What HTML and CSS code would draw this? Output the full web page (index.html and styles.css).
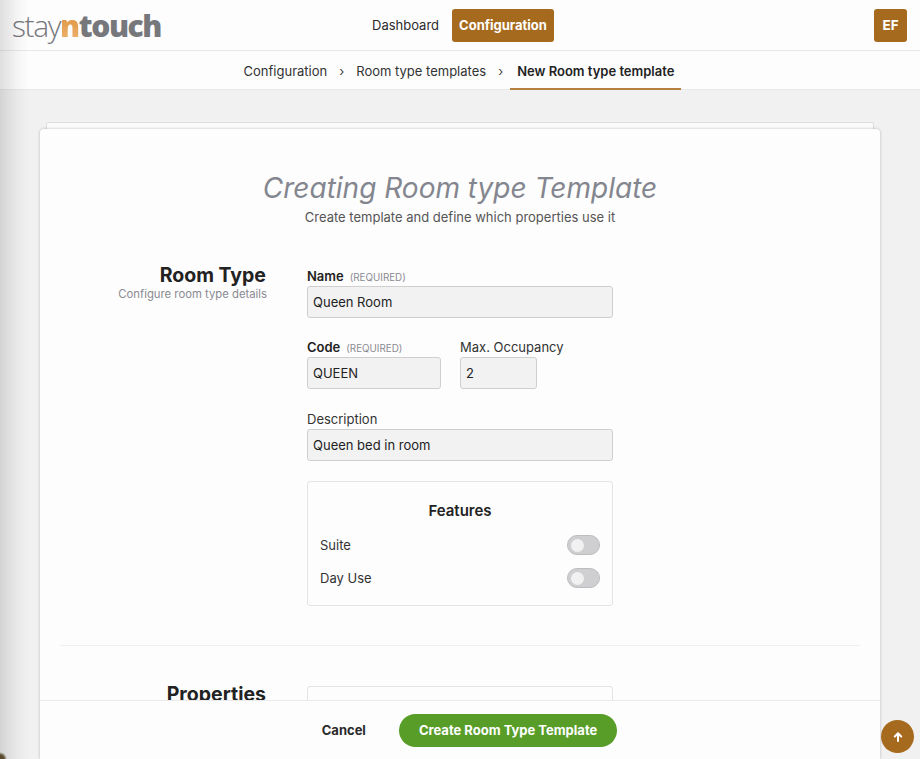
FILE: index.html
```html
<!DOCTYPE html>
<html lang="en">
<head>
  <meta charset="UTF-8">
  <title>Creating Room type Template</title>
  <link rel="stylesheet" href="styles.css">
</head>
<body>

  <div class="edge-shadow"></div>

  <header class="topbar">
    <div class="logo"><span class="logo-stay">stay</span><span class="logo-n">n</span><span class="logo-touch">touch</span></div>
    <nav class="main-nav">
      <a class="nav-link">Dashboard</a>
      <a class="nav-link active">Configuration</a>
    </nav>
    <div class="avatar">EF</div>
  </header>

  <div class="crumbs">
    <a class="crumb">Configuration</a>
    <span class="crumb-sep">›</span>
    <a class="crumb">Room type templates</a>
    <span class="crumb-sep">›</span>
    <a class="crumb current">New Room type template</a>
  </div>

  <main class="page">
    <div class="sheet-behind"></div>
    <div class="card">
      <div class="card-body">
        <h1 class="title">Creating Room type Template</h1>
        <p class="subtitle">Create template and define which properties use it</p>

        <section class="section">
          <div class="section-head">
            <h2>Room Type</h2>
            <p>Configure room type details</p>
          </div>
          <div class="section-fields">
            <div class="field">
              <label><b>Name</b><small>(REQUIRED)</small></label>
              <div class="input">Queen Room</div>
            </div>
            <div class="field-row">
              <div class="field code">
                <label><b>Code</b><small>(REQUIRED)</small></label>
                <div class="input">QUEEN</div>
              </div>
              <div class="field occupancy">
                <label>Max. Occupancy</label>
                <div class="input">2</div>
              </div>
            </div>
            <div class="field">
              <label>Description</label>
              <div class="input">Queen bed in room</div>
            </div>
            <div class="features">
              <h3>Features</h3>
              <div class="feature"><span>Suite</span><i class="toggle"></i></div>
              <div class="feature"><span>Day Use</span><i class="toggle"></i></div>
            </div>
          </div>
        </section>

        <hr class="divider">

        <section class="section">
          <div class="section-head props">
            <h2>Properties</h2>
          </div>
          <div class="section-fields">
            <div class="props-box"></div>
          </div>
        </section>
      </div>

      <footer class="card-footer">
        <a class="cancel">Cancel</a>
        <a class="create">Create Room Type Template</a>
      </footer>
    </div>
  </main>

  <a class="to-top">
    <svg width="12" height="12" viewBox="0 0 12 12" fill="none" stroke="#fff" stroke-width="2" stroke-linecap="round" stroke-linejoin="round"><path d="M6 10V2.5M2.8 5.5 6 2.3l3.2 3.2"/></svg>
  </a>

</body>
</html>
```

FILE: styles.css
```css
* {
  box-sizing: border-box;
}

html, body {
  height: 100%;
}

body {
  margin: 0;
  height: 759px;
  overflow: hidden;
  display: flex;
  flex-direction: column;
  font-family: 'Inter', sans-serif;
  font-size: 14px;
  background-color: #f1f1f1;
  color: #222;
}

/* soft shadow of the panel lying off the left edge */
.edge-shadow {
  position: absolute;
  left: 0;
  top: 0;
  bottom: 0;
  width: 30px;
  z-index: 5;
  pointer-events: none;
  background:
    radial-gradient(circle at 0 100%, #5a4a30 4px, rgba(90, 74, 48, 0) 7px),
    linear-gradient(to right, rgba(0, 0, 0, 0.12), rgba(0, 0, 0, 0.03) 60%, rgba(0, 0, 0, 0));
}

.topbar {
  height: 51px;
  flex: none;
  display: flex;
  align-items: center;
  padding: 1px 13px 0 12px;
  background-color: #fdfdfd;
  border-bottom: 1px solid #e9e9e9;
}

.logo {
  width: 340px;
  font-family: 'Open Sans', sans-serif;
  font-size: 30px;
  line-height: 46px;
  letter-spacing: -1.4px;
  color: #77787c;
}

.logo-stay {
  font-weight: 300;
}

.logo-n {
  font-weight: 800;
  background: linear-gradient(to bottom, #d98a2e, #f0b878);
  -webkit-background-clip: text;
  background-clip: text;
  color: transparent;
}

.logo-touch {
  font-weight: 800;
}

.main-nav {
  display: flex;
  align-items: center;
  gap: 6px;
  flex: 1;
  margin-left: 13px;
}

.nav-link {
  padding: 0 7px;
  height: 33px;
  line-height: 33px;
  font-size: 13px;
  color: #2b2b2b;
}

.nav-link.active {
  background-color: #a66a1e;
  color: #fff;
  font-weight: 700;
  border-radius: 3px;
}

.avatar {
  width: 33px;
  height: 33px;
  line-height: 33px;
  text-align: center;
  background-color: #a66a1e;
  color: #fff;
  font-weight: 700;
  font-size: 13.5px;
  border-radius: 3px;
}

.crumbs {
  height: 39px;
  flex: none;
  display: flex;
  align-items: center;
  justify-content: center;
  gap: 12px;
  padding-left: 5px;
  background-color: #fdfdfd;
  border-bottom: 1px solid #e9e9e9;
  font-size: 13px;
  color: #333;
}

.crumb,
.crumb-sep {
  padding-top: 2px;
}

.crumb-sep {
  color: #444;
  font-size: 13px;
}

.crumb.current {
  align-self: stretch;
  line-height: 40px;
  height: 39px;
  padding: 0 7px 0 7px;
  margin-left: -5px;
  font-weight: 600;
  font-size: 13px;
  color: #222;
  border-bottom: 2px solid #b57f3f;
}

.page {
  flex: 1;
  min-height: 0;
  display: flex;
  flex-direction: column;
  padding: 32px 40px 0;
}

.sheet-behind {
  height: 7px;
  flex: none;
  margin: 0 6px;
  background-color: #fbfbfb;
  border: 1px solid #dcdcdc;
  border-bottom: none;
  border-radius: 2px 2px 0 0;
}

.card {
  flex: 1;
  min-height: 0;
  display: flex;
  flex-direction: column;
  background-color: #fdfdfd;
  border-radius: 4px 4px 0 0;
  box-shadow: 0 0 3px rgba(0, 0, 0, 0.25);
}

.card-body {
  flex: 1;
  min-height: 0;
  overflow: hidden;
  padding: 0 20px;
}

.title {
  margin: 41px 0 0;
  text-align: center;
  font-size: 28px;
  line-height: 36px;
  font-weight: 400;
  font-style: italic;
  color: #84868f;
}

.subtitle {
  margin: 2px 0 0;
  text-align: center;
  font-size: 13px;
  line-height: 18px;
  color: #555;
}

.section {
  display: flex;
  margin-top: 30px;
}

.section-head {
  width: 207px;
  margin-right: 40px;
  text-align: right;
}

.section-head h2 {
  margin: 8px 1px 0 0;
  font-size: 19.5px;
  line-height: 22px;
  font-weight: 700;
  color: #222;
}

.section-head p {
  margin: 1px 0 0;
  font-size: 11.3px;
  line-height: 15px;
  color: #8a8a92;
}

.section-fields {
  width: 306px;
  padding-top: 10px;
}

.field {
  margin-bottom: 20px;
}

.field label {
  display: block;
  height: 20px;
  line-height: 20px;
  font-size: 13px;
  color: #333;
  white-space: nowrap;
}

.field label b {
  font-weight: 600;
  color: #222;
}

.field small {
  margin-left: 6px;
  font-size: 9.8px;
  color: #8a8a92;
}

.input {
  height: 32px;
  line-height: 30px;
  padding: 0 5px;
  font-size: 13px;
  color: #222;
  background-color: #f2f2f2;
  border: 1px solid #cfcfcf;
  border-radius: 3px;
}

.field-row {
  display: flex;
  gap: 19px;
  margin-top: -1px;
}

.field.code {
  width: 134px;
}

.field.occupancy {
  width: 77px;
}

.features {
  height: 125px;
  padding: 20px 12px 0;
  border: 1px solid #e4e4e4;
  border-radius: 3px;
}

.features h3 {
  margin: 0 0 15px;
  text-align: center;
  font-size: 15px;
  line-height: 18px;
  font-weight: 600;
}

.feature {
  display: flex;
  align-items: center;
  justify-content: space-between;
  height: 20px;
  margin-bottom: 13px;
  font-size: 13px;
  color: #333;
}

.toggle {
  display: block;
  position: relative;
  width: 33px;
  height: 20px;
  background-color: #cfcfd1;
  border: 1px solid #bdbdbf;
  border-radius: 10px;
}

.toggle::after {
  content: "";
  display: block;
  width: 13px;
  height: 13px;
  margin: 2.5px 0 0 3px;
  background-color: #f1f1f1;
  border-radius: 50%;
}

.divider {
  margin: 39px 0 0;
  border: none;
  border-top: 1px solid #efefef;
}

.section-head.props h2 {
  margin-top: 7px;
}

.props-box {
  height: 60px;
  border: 1px solid #e4e4e4;
  border-radius: 3px;
}

.card-footer {
  height: 59px;
  flex: none;
  display: flex;
  align-items: center;
  justify-content: center;
  gap: 33px;
  padding: 0 0 0 19px;
  background-color: #fdfdfd;
  border-top: 1px solid #eaeaea;
}

.cancel {
  font-size: 13px;
  font-weight: 700;
  color: #2a2a2a;
}

.create {
  height: 33px;
  line-height: 33px;
  padding: 0 20px;
  font-size: 13px;
  font-weight: 700;
  color: #fff;
  background-color: #579d27;
  border-radius: 17px;
}

.to-top {
  position: absolute;
  left: 881px;
  top: 720px;
  width: 33px;
  height: 33px;
  display: flex;
  align-items: center;
  justify-content: center;
  background-color: #a66a1e;
  border-radius: 50%;
}
```
